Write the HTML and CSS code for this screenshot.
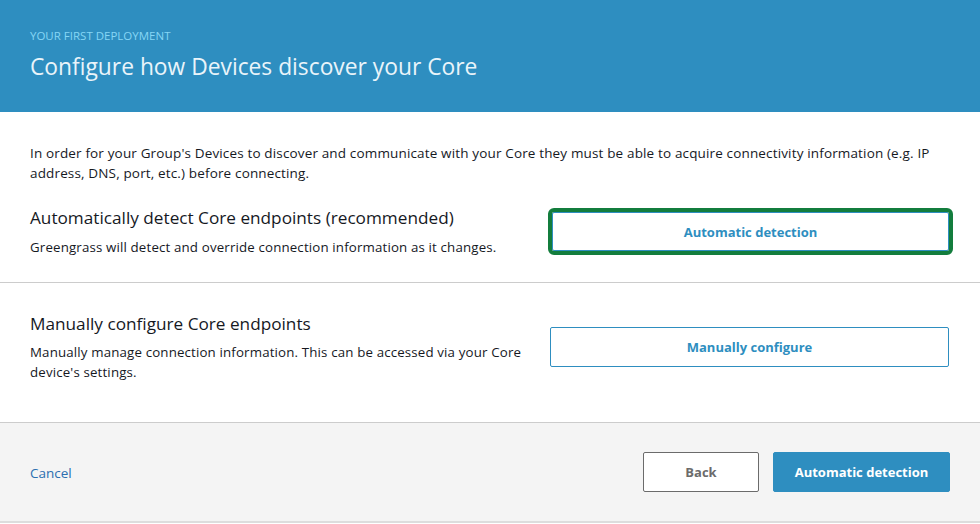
FILE: index.html
```html
<!DOCTYPE html>
<html>
<head>
<meta charset="utf-8">
<link rel="stylesheet" href="styles.css">
</head>
<body>
<div class="page">
  <header class="hero">
    <div class="eyebrow">YOUR FIRST DEPLOYMENT</div>
    <h1 class="title">Configure how Devices discover your Core</h1>
  </header>
  <section class="intro">
    <p class="lead">In order for your Group's Devices to discover and communicate with your Core they must be able to acquire connectivity information (e.g. IP address, DNS, port, etc.) before connecting.</p>
    <div class="option">
      <div class="option-text">
        <h2 class="option-title">Automatically detect Core endpoints (recommended)</h2>
        <p class="option-desc">Greengrass will detect and override connection information as it changes.</p>
      </div>
      <div class="option-action">
        <button class="btn-outline focused">Automatic detection</button>
      </div>
    </div>
  </section>
  <section class="manual">
    <div class="option">
      <div class="option-text">
        <h2 class="option-title">Manually configure Core endpoints</h2>
        <p class="option-desc">Manually manage connection information. This can be accessed via your Core device's settings.</p>
      </div>
      <div class="option-action">
        <button class="btn-outline">Manually configure</button>
      </div>
    </div>
  </section>
  <footer class="footer">
    <a class="cancel" href="#">Cancel</a>
    <div class="footer-actions">
      <button class="btn-back">Back</button>
      <button class="btn-primary">Automatic detection</button>
    </div>
  </footer>
</div>
</body>
</html>
```

FILE: styles.css
```css
* { box-sizing: border-box; }
html, body { margin: 0; padding: 0; background: #fff; }
body { font-family: "Open Sans", "Liberation Sans", sans-serif; color: #16191f; }
.page { width: 980px; }
.hero {
  background: #2e8ec0;
  height: 112px;
  padding: 29px 30px 0;
}
.eyebrow {
  font-size: 11.5px;
  color: #86d6f5;
  line-height: 14px;
}
.title {
  margin: 8px 0 0;
  font-weight: 400;
  font-size: 22.8px;
  line-height: 32px;
  color: #e9f4fa;
}
.intro {
  padding: 32px 30px 25px;
  border-bottom: 1px solid #cccccc;
}
.lead {
  margin: 0 0 23px;
  font-size: 13.5px;
  line-height: 19.5px;
  color: #16191f;
  letter-spacing: 0.15px;
}
.option {
  display: flex;
  align-items: center;
  justify-content: space-between;
}
.option-text { width: 500px; }
.option-title {
  margin: 0;
  font-weight: 400;
  font-size: 17.2px;
  line-height: 24px;
  color: #16191f;
}
.option-desc {
  margin: 7px 0 0;
  font-size: 13.3px;
  line-height: 20px;
  color: #16191f;
  letter-spacing: 0.15px;
}
.option-action { width: 400px; padding-right: 1px; }
.btn-outline {
  display: block;
  width: 399px;
  height: 40px;
  background: #fff;
  border: 1px solid #2e8ec0;
  border-radius: 2px;
  color: #2e8ec0;
  font-family: inherit;
  font-weight: 700;
  font-size: 13px;
}
.btn-outline.focused {
  outline: 4px solid #137d3d;
  outline-offset: 0px;
  height: 39px;
  width: 397px;
  margin-left: 2px;
}
.manual {
  padding: 29px 30px 40px;
  border-bottom: 1px solid #cccccc;
}
.manual .option-desc { margin-top: 6px; }
.footer {
  background: #f4f4f4;
  height: 100px;
  padding: 0 30px;
  display: flex;
  align-items: center;
  justify-content: space-between;
  border-bottom: 2px solid #dddddd;
}
.cancel {
  color: #2c6fb0;
  font-size: 13.5px;
  text-decoration: none;
  margin-top: 2px;
}
.footer-actions { display: flex; gap: 14px; }
.btn-back {
  width: 116px;
  height: 40px;
  background: #fff;
  border: 1px solid #6b6b6b;
  border-radius: 2px;
  color: #6b6b6b;
  font-family: inherit;
  font-weight: 700;
  font-size: 13px;
}
.btn-primary {
  width: 177px;
  height: 40px;
  background: #2e8ec0;
  border: 1px solid #2e8ec0;
  border-radius: 2px;
  color: #fff;
  font-family: inherit;
  font-weight: 700;
  font-size: 13px;
}
```
